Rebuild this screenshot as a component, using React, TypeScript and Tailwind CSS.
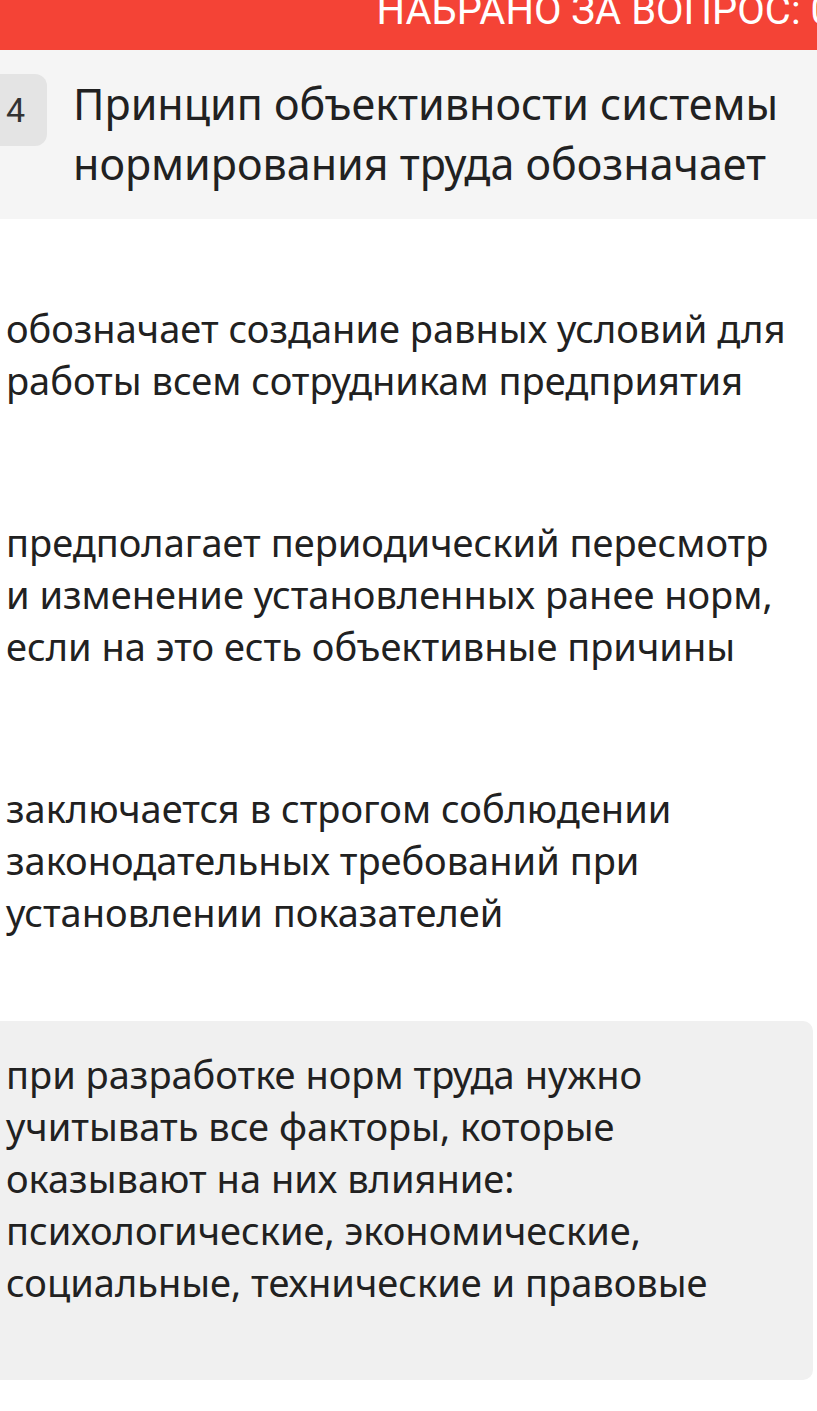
import React from "react";

const ANSWERS = [
  "обозначает создание равных условий для работы всем сотрудникам предприятия",
  "предполагает периодический пересмотр и изменение установленных ранее норм, если на это есть объективные причины",
  "заключается в строгом соблюдении законодательных требований при установлении показателей",
  "при разработке норм труда нужно учитывать все факторы, которые оказывают на них влияние: психологические, экономические, социальные, технические и правовые",
];

const SELECTED = 3;

export default function App() {
  return (
    <div className="min-h-[1411px] bg-white text-[#212121] [font-family:'Noto_Sans',sans-serif]">
      <div className="flex h-[50px] justify-end overflow-hidden bg-[#f44336]">
        <span className="-mr-[16px] -mt-[9px] whitespace-nowrap text-[40px] leading-none text-white [font-family:Roboto,sans-serif]">
          НАБРАНО ЗА ВОПРОС: 0
        </span>
      </div>

      <div className="flex items-start bg-[#f5f5f5] pb-[25px] pt-[24px]">
        <div className="-ml-4 flex h-[72px] w-[63px] shrink-0 items-center justify-center rounded-xl bg-[#e4e4e4] text-[34px] leading-none text-[#333] [font-family:Roboto,sans-serif]">
          4
        </div>
        <h1 className="ml-[26px] pr-4 text-[43px] leading-[60px] font-normal">
          Принцип объективности системы нормирования труда обозначает
        </h1>
      </div>

      <div className="mt-[56px] flex flex-col gap-[14px] pr-[4px]">
        {ANSWERS.map((a, i) => (
          <div
            key={i}
            className={`rounded-r-[10px] pl-[6px] pr-4 pt-[27px] text-[38px] leading-[52px] ${
              i === SELECTED ? "bg-[#f0f0f0] pb-[72px]" : "pb-[69px]"
            }`}
          >
            {a}
          </div>
        ))}
      </div>
    </div>
  );
}
